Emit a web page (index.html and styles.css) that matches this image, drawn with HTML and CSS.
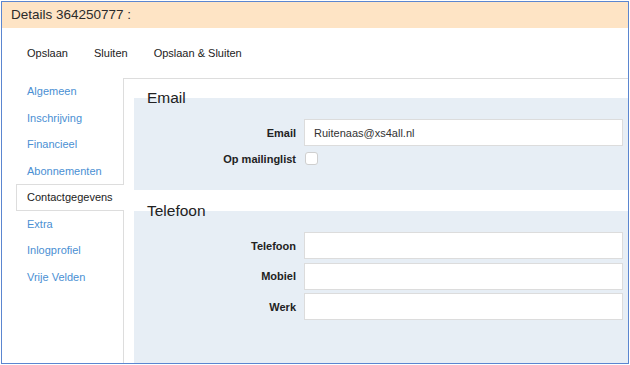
FILE: index.html
```html
<html>
<head>
<meta charset="UTF-8">
<title>Details 364250777</title>
<link rel="stylesheet" href="styles.css">
</head>
<body>
<div class="window">
	<div class="titlebar">Details 364250777 :</div>
	<div class="toolbar">
		<span class="tbtn">Opslaan</span>
		<span class="tbtn">Sluiten</span>
		<span class="tbtn">Opslaan &amp; Sluiten</span>
	</div>
	<div class="main">
		<ul class="tabs">
			<li class="tab">Algemeen</li>
			<li class="tab">Inschrijving</li>
			<li class="tab">Financieel</li>
			<li class="tab">Abonnementen</li>
			<li class="tab active">Contactgegevens</li>
			<li class="tab">Extra</li>
			<li class="tab">Inlogprofiel</li>
			<li class="tab">Vrije Velden</li>
		</ul>
		<div class="panel">
			<fieldset class="group">
				<legend>Email</legend>
				<div class="row">
					<label>Email</label>
					<input type="text" class="field" value="Ruitenaas@xs4all.nl">
				</div>
				<div class="row small">
					<label>Op mailinglist</label>
					<div><input type="checkbox" class="check"></div>
				</div>
			</fieldset>
			<fieldset class="group grow">
				<legend>Telefoon</legend>
				<div class="row">
					<label>Telefoon</label>
					<input type="text" class="field">
				</div>
				<div class="row">
					<label>Mobiel</label>
					<input type="text" class="field">
				</div>
				<div class="row">
					<label>Werk</label>
					<input type="text" class="field">
				</div>
			</fieldset>
		</div>
	</div>
</div>
</body>
</html>
```

FILE: styles.css
```css
body {
	margin: 0;
	font-family: 'Liberation Sans', Arial, sans-serif;
	font-size: 11px;
	color: #333333;
	background-color: #ffffff;
}
.window {
	margin: 1px;
	width: 626px;
	height: 361px;
	border: 1px solid #5b86d0;
	display: flex;
	flex-direction: column;
	overflow: hidden;
}
.titlebar {
	height: 26px;
	line-height: 26px;
	padding-left: 9px;
	background-color: #fee4c5;
	font-size: 13.5px;
	color: #2b2b2b;
}
.toolbar {
	height: 50px;
	display: flex;
	align-items: center;
	padding-left: 12px;
}
.tbtn {
	padding: 0 13px;
	color: #222222;
}
.main {
	flex: 1;
	display: flex;
	min-height: 0;
}
.tabs {
	list-style: none;
	margin: 0;
	padding: 0 0 0 14px;
	width: 121px;
	box-sizing: border-box;
}
.tab {
	height: 24.5px;
	line-height: 24.5px;
	padding: 0 10px;
	border: 1px solid transparent;
	color: #4a8fd3;
	white-space: nowrap;
}
.tab.active {
	position: relative;
	z-index: 1;
	margin-right: -1px;
	border-color: #dddddd;
	border-right: none;
	background-color: #ffffff;
	color: #222222;
}
.panel {
	flex: 1;
	display: flex;
	flex-direction: column;
	border-top: 1px solid #dddddd;
	border-left: 1px solid #dddddd;
	padding: 10px 0 0 10px;
}
.group {
	margin: 0;
	border: none;
	min-width: 0;
	padding: 12px 5px 19px 0;
	background-color: #e7eef5;
}
.group + .group {
	margin-top: 12px;
}
.grow {
	flex: 1;
}
.group legend {
	margin-left: 13px;
	padding: 0;
	font-size: 15.5px;
	line-height: 18px;
	color: #222222;
}
.row {
	display: grid;
	grid-template-columns: 162px 1fr;
	column-gap: 8px;
	align-items: center;
	margin-bottom: 3.5px;
}
.row label {
	text-align: right;
	font-weight: bold;
	color: #222222;
}
.row.small {
	height: 18px;
}
.field {
	height: 27px;
	box-sizing: border-box;
	margin: 0;
	border: 1px solid #dcdcdc;
	padding: 0 9px;
	background-color: #ffffff;
	font-family: 'Liberation Sans', Arial, sans-serif;
	font-size: 11px;
	color: #333333;
}
.check {
	-webkit-appearance: none;
	appearance: none;
	display: block;
	width: 13px;
	height: 13px;
	margin: 0 0 0 1px;
	border: 1px solid #cfcfcf;
	border-radius: 3px;
	background-color: #ffffff;
}
```
